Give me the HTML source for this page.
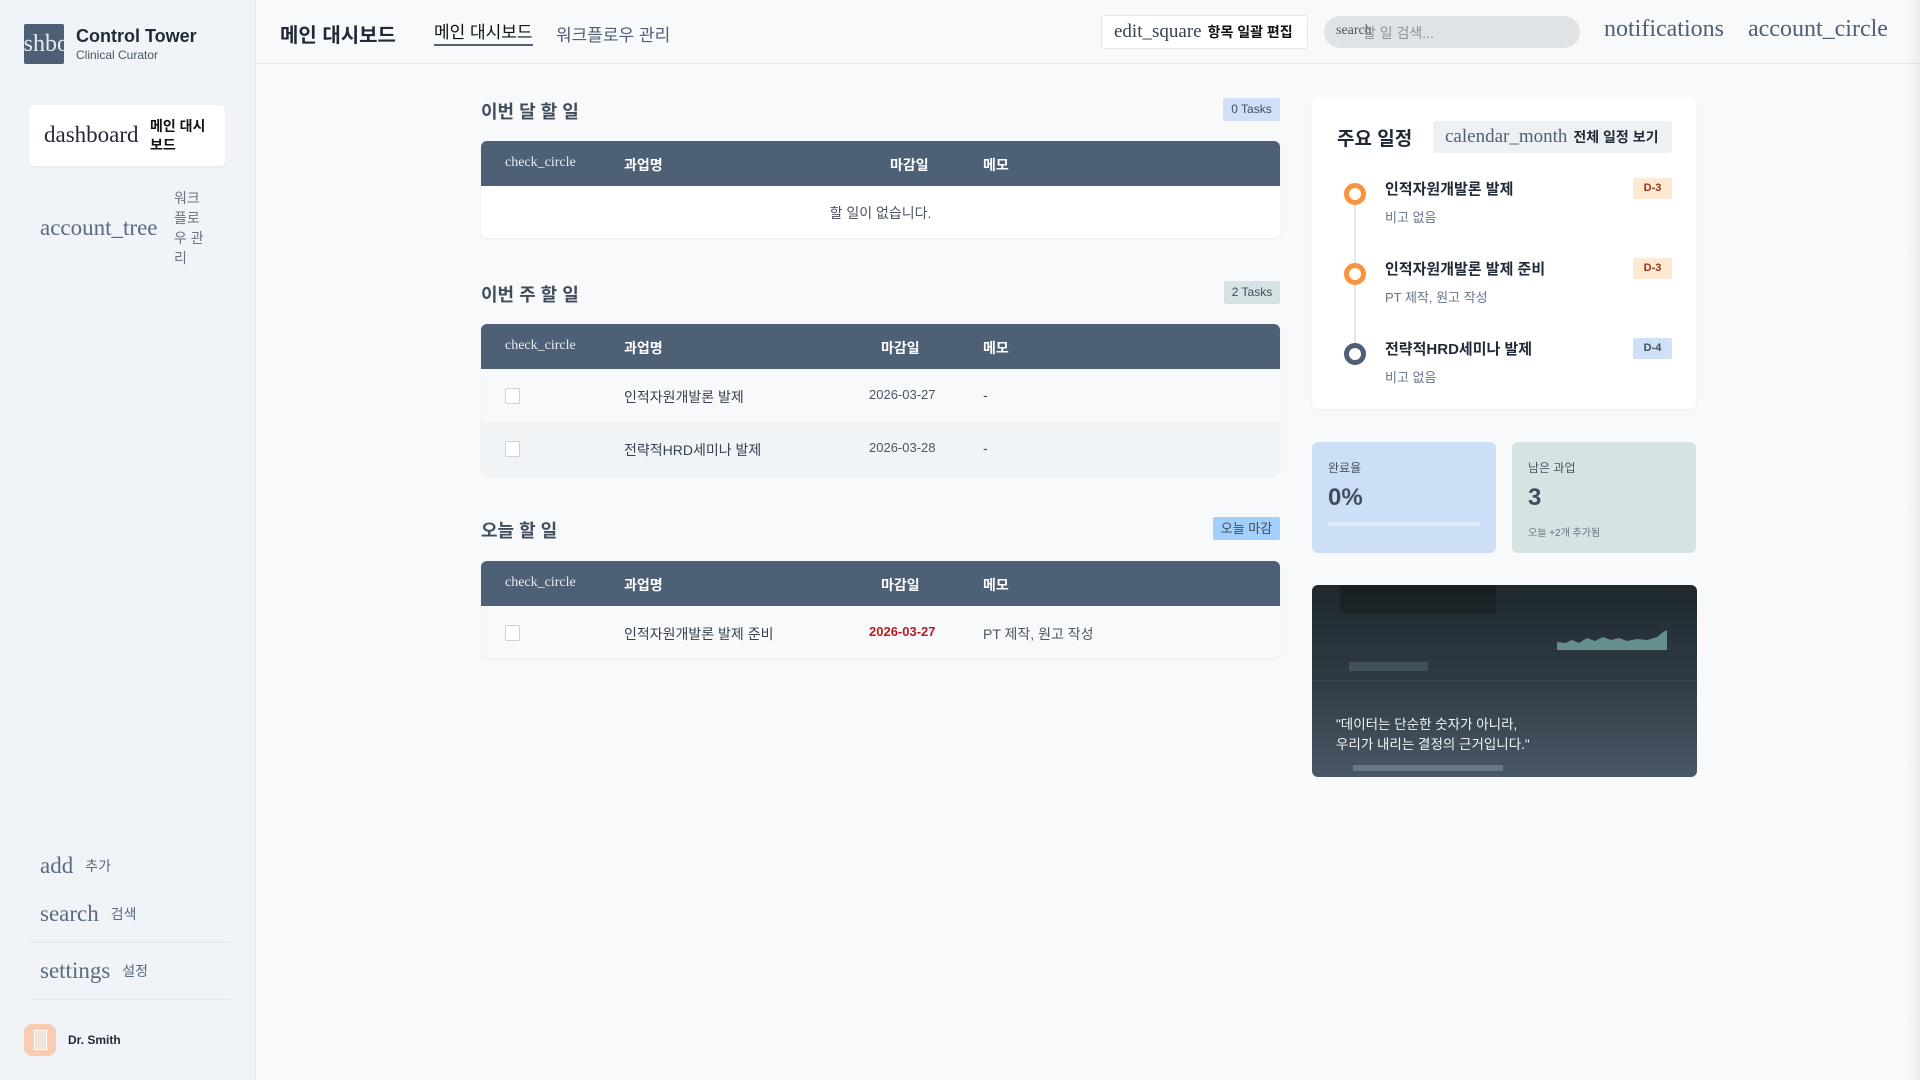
<!DOCTYPE html>
<html><head><meta charset="utf-8"><style>
*{box-sizing:border-box;margin:0;padding:0}
body{width:1920px;height:1080px;overflow:hidden;background:#f7f9fb;font-family:"Liberation Sans","Noto Sans CJK KR",sans-serif;color:#1f2937;position:relative}
.a{position:absolute;white-space:nowrap}
.ser{font-family:"Liberation Serif","Noto Serif CJK SC",serif}
.side{position:absolute;left:0;top:0;width:256px;height:1080px;background:#f0f3f8;border-right:1px solid #e3e7ed}
.hdr{position:absolute;left:256px;top:0;width:1664px;height:64px;border-bottom:1px solid #e5e8ec;background:#f7f9fb}
.title{font-size:18px;font-weight:bold;color:#3f4d5e}
.badge{font-size:12px;color:#3f4d5e;text-align:center;line-height:23px;border-radius:2px}
.tbl{position:absolute;left:481px;width:799px;border-radius:6px;overflow:hidden;box-shadow:0 1px 2px rgba(0,0,0,.06);background:#fff}
.th{height:45px;background:#4e6075;position:relative;color:#fff}
.th span{position:absolute;top:14px;font-size:14px;font-weight:bold}
.th .ser{font-weight:normal;font-size:14px;top:14px;left:24px;color:#e8edf2}
.row{height:53px;position:relative;font-size:14px;color:#374151}
.row span{position:absolute;top:18px}
.cb{position:absolute;left:24px;top:19px;width:15px;height:16px;border:1px solid #cbd2da;border-radius:2px;background:#fff}
.dot{position:absolute;left:1344px;width:22px;height:22px;border-radius:50%;border:5px solid #fb923c;background:#fff}
.it{font-size:15px;font-weight:bold;color:#1f2937}
.sub{font-size:13px;color:#64748b}
.db{position:absolute;left:1633px;width:39px;height:21px;border-radius:2px;font-size:11px;font-weight:bold;text-align:center;line-height:21px}
.fx{position:absolute;display:flex;align-items:center;white-space:nowrap}
</style></head><body>
<div class="side"></div>
<div class="a" style="left:24px;top:24px;width:40px;height:40px;background:#4e6075;border-radius:2px;overflow:hidden"><span class="ser" style="position:absolute;left:-23px;top:7px;font-size:24px;color:#e6ebf0">dashboard</span></div>
<div class="a" style="left:76px;top:26px;font-size:18px;font-weight:bold;color:#1f2937">Control Tower</div>
<div class="a" style="left:76px;top:48px;font-size:12px;color:#4b5563">Clinical Curator</div>
<div class="a" style="left:29px;top:105px;width:196px;height:61px;background:#fff;border-radius:5px;box-shadow:0 1px 2px rgba(0,0,0,.05)"></div>
<div class="a ser" style="left:44px;top:122px;font-size:23px;color:#1f2937">dashboard</div>
<div class="a" style="left:150px;top:117px;width:64px;white-space:normal;font-size:14px;font-weight:bold;line-height:19px;color:#111">메인 대시 보드</div>
<div class="a ser" style="left:40px;top:215px;font-size:23px;color:#5a6b80">account_tree</div>
<div class="a" style="left:174px;top:188px;width:34px;white-space:normal;font-size:14px;line-height:20px;color:#6b7280;word-break:break-all">워크플로우 관리</div>
<div class="fx" style="left:40px;top:850px;height:32px"><span class="ser" style="font-size:23px;color:#5a6b80">add</span><span style="font-size:14px;color:#5a6b80;margin-left:12px">추가</span></div>
<div class="fx" style="left:40px;top:898px;height:32px"><span class="ser" style="font-size:23px;color:#5a6b80">search</span><span style="font-size:14px;color:#5a6b80;margin-left:12px">검색</span></div>
<div class="a" style="left:29px;top:942px;width:202px;height:1px;background:#e3e7ed"></div>
<div class="fx" style="left:40px;top:955px;height:32px"><span class="ser" style="font-size:23px;color:#5a6b80">settings</span><span style="font-size:14px;color:#5a6b80;margin-left:12px">설정</span></div>
<div class="a" style="left:29px;top:999px;width:202px;height:1px;background:#e3e7ed"></div>
<div class="a" style="left:24px;top:1024px;width:32px;height:32px;border-radius:8px;background:#f9cdb2"><div style="position:absolute;left:10px;top:6px;width:13px;height:20px;background:#f1e3d8;border:1px solid #fff"></div></div>
<div class="a" style="left:68px;top:1033px;font-size:12px;font-weight:bold;color:#1f2937">Dr. Smith</div>

<div class="hdr"></div>
<div class="a" style="left:280px;top:19px;font-size:20px;font-weight:bold;color:#1f2937">메인 대시보드</div>
<div class="a" style="left:434px;top:18px;font-size:17px;color:#111">메인 대시보드</div>
<div class="a" style="left:434px;top:44px;width:99px;height:2px;background:#4e6075"></div>
<div class="a" style="left:556px;top:21px;font-size:17px;color:#4e6075">워크플로우 관리</div>
<div class="fx" style="left:1101px;top:15px;width:207px;height:34px;background:#fff;border:1px solid #e3e7ed;border-radius:3px;padding-left:12px"><span class="ser" style="font-size:19px;color:#374151">edit_square</span><span style="font-size:14px;font-weight:bold;color:#111;margin-left:6px">항목 일괄 편집</span></div>
<div class="a" style="left:1324px;top:16px;width:256px;height:32px;background:#dfe3e6;border-radius:16px"></div>
<div class="a ser" style="left:1336px;top:23px;font-size:14px;color:#555">search</div>
<div class="a" style="left:1363px;top:23px;font-size:14px;color:#8a939c">할 일 검색...</div>
<div class="a ser" style="left:1604px;top:16px;font-size:24px;color:#4e6075">notifications</div>
<div class="a ser" style="left:1748px;top:16px;font-size:24px;color:#4e6075">account_circle</div>
<div class="a" style="left:1905px;top:0;width:15px;height:1080px;background:linear-gradient(90deg,rgba(0,0,0,0),rgba(0,0,0,.05))"></div>

<div class="a title" style="left:481px;top:98px">이번 달 할 일</div>
<div class="a badge" style="left:1223px;top:98px;width:57px;background:#cfe0f7">0 Tasks</div>
<div class="tbl" style="top:141px;height:97px">
<div class="th"><span class="ser">check_circle</span><span style="left:143px">과업명</span><span style="left:409px">마감일</span><span style="left:502px">메모</span></div>
<div style="text-align:center;font-size:14px;color:#4b5563;padding-top:17px">할 일이 없습니다.</div>
</div>
<div class="a title" style="left:481px;top:281px">이번 주 할 일</div>
<div class="a badge" style="left:1224px;top:281px;width:56px;background:#d6e2e4">2 Tasks</div>
<div class="tbl" style="top:324px;height:151px">
<div class="th"><span class="ser">check_circle</span><span style="left:143px">과업명</span><span style="left:400px">마감일</span><span style="left:502px">메모</span></div>
<div class="row" style="background:#f8f9fb"><div class="cb"></div><span style="left:143px">인적자원개발론 발제</span><span style="left:388px;color:#4b5563;font-size:13px">2026-03-27</span><span style="left:502px">-</span></div>
<div class="row" style="background:#f1f4f6"><div class="cb"></div><span style="left:143px">전략적HRD세미나 발제</span><span style="left:388px;color:#4b5563;font-size:13px">2026-03-28</span><span style="left:502px">-</span></div>
</div>
<div class="a title" style="left:481px;top:517px">오늘 할 일</div>
<div class="a badge" style="left:1213px;top:517px;width:67px;background:#a3cffb;font-size:13px">오늘 마감</div>
<div class="tbl" style="top:561px;height:97px">
<div class="th"><span class="ser">check_circle</span><span style="left:143px">과업명</span><span style="left:400px">마감일</span><span style="left:502px">메모</span></div>
<div class="row" style="background:#f8f9fb"><div class="cb"></div><span style="left:143px">인적자원개발론 발제 준비</span><span style="left:388px;color:#b91c1c;font-weight:bold;font-size:13px">2026-03-27</span><span style="left:502px;color:#4b5563">PT 제작, 원고 작성</span></div>
</div>

<div class="a" style="left:1312px;top:97px;width:384px;height:312px;background:#fff;border-radius:6px;box-shadow:0 1px 2px rgba(0,0,0,.05)"></div>
<div class="a" style="left:1337px;top:124px;font-size:19px;font-weight:bold;color:#1f2937">주요 일정</div>
<div class="fx" style="left:1433px;top:121px;width:239px;height:32px;background:#eef1f3;border-radius:3px;padding-left:12px"><span class="ser" style="font-size:19px;color:#4e6075">calendar_month</span><span style="font-size:14px;font-weight:bold;color:#1f2937;margin-left:6px">전체 일정 보기</span></div>
<div class="a" style="left:1354px;top:200px;width:2px;height:150px;background:#e2e8f0"></div>
<div class="dot" style="top:183px"></div>
<div class="dot" style="top:263px"></div>
<div class="dot" style="top:343px;border-color:#4e6075"></div>
<div class="a it" style="left:1385px;top:178px">인적자원개발론 발제</div>
<div class="a sub" style="left:1385px;top:207px">비고 없음</div>
<div class="a it" style="left:1385px;top:258px">인적자원개발론 발제 준비</div>
<div class="a sub" style="left:1385px;top:287px">PT 제작, 원고 작성</div>
<div class="a it" style="left:1385px;top:338px">전략적HRD세미나 발제</div>
<div class="a sub" style="left:1385px;top:367px">비고 없음</div>
<div class="db" style="top:178px;background:#fde8d4;color:#9a3412">D-3</div>
<div class="db" style="top:258px;background:#fde8d4;color:#9a3412">D-3</div>
<div class="db" style="top:338px;background:#cfe0f7;color:#3f4d5e">D-4</div>

<div class="a" style="left:1312px;top:442px;width:184px;height:111px;background:#cddff6;border-radius:6px"></div>
<div class="a" style="left:1328px;top:459px;font-size:12px;color:#4b5563">완료율</div>
<div class="a" style="left:1328px;top:484px;font-size:24px;font-weight:bold;color:#3f4d5e">0%</div>
<div class="a" style="left:1328px;top:522px;width:152px;height:4px;border-radius:2px;background:#e3edf9"></div>
<div class="a" style="left:1512px;top:442px;width:184px;height:111px;background:#d6e3e4;border-radius:6px"></div>
<div class="a" style="left:1528px;top:459px;font-size:12px;color:#4b5563">남은 과업</div>
<div class="a" style="left:1528px;top:484px;font-size:24px;font-weight:bold;color:#3f4d5e">3</div>
<div class="a" style="left:1528px;top:524px;font-size:10px;color:#6b7280">오늘 +2개 추가됨</div>

<div class="a" style="left:1312px;top:585px;width:385px;height:192px;border-radius:6px;overflow:hidden;background:linear-gradient(180deg,#1e282d 0%,#2f3b44 50%,#4a5766 100%)">
<div style="position:absolute;left:28px;top:0;width:156px;height:28px;background:rgba(0,0,0,.2)"></div>
<div style="position:absolute;left:0;top:95px;width:385px;height:1px;background:rgba(255,255,255,.06)"></div>
<div style="position:absolute;left:37px;top:77px;width:79px;height:9px;background:rgba(120,140,150,.3)"></div>
<div style="position:absolute;left:41px;top:180px;width:150px;height:6px;background:rgba(130,150,165,.55)"></div>
<svg style="position:absolute;left:245px;top:45px" width="110" height="25" viewBox="0 0 110 25"><path d="M0 12 L8 13 L15 10 L22 13 L30 8 L38 11 L46 7 L54 10 L62 8 L70 11 L80 9 L90 10 L100 7 L106 2 L110 0 L110 20 L0 20Z" fill="#7fb5b5" opacity=".7"/></svg>
<div style="position:absolute;left:24px;top:130px;font-size:13.5px;color:#f1f5f9;line-height:20px">"데이터는 단순한 숫자가 아니라,<br>우리가 내리는 결정의 근거입니다."</div>
</div>
</body></html>
